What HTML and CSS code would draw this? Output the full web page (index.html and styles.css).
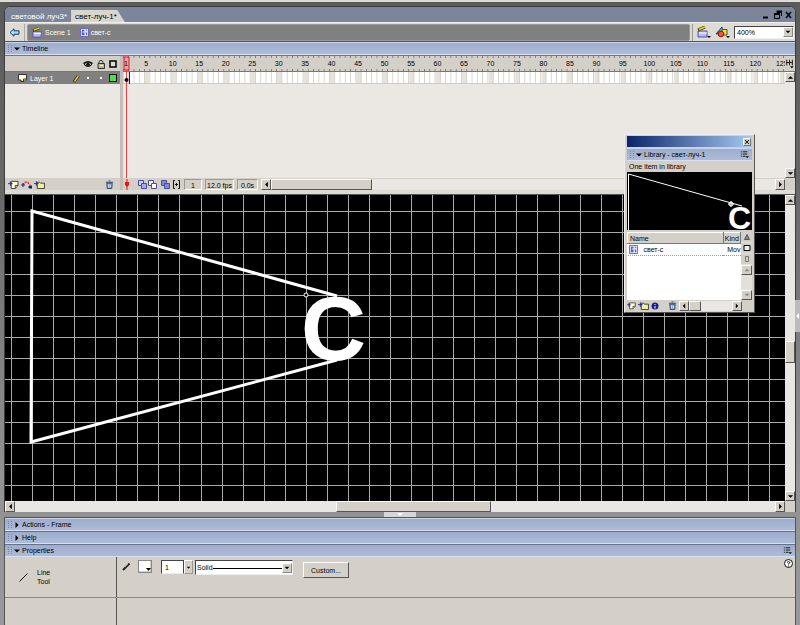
FILE: index.html
```html
<!DOCTYPE html>
<html lang="ru">
<head>
<meta charset="utf-8">
<meta name="viewport" content="width=device-width, initial-scale=1">
<title>свет-луч-1</title>
<link rel="stylesheet" href="styles.css">
</head>
<body>
<svg width="0" height="0" class="defs" aria-hidden="true">
  <symbol id="up" viewBox="0 0 10 10"><path d="M2 6.500H8L5 3.500Z"/></symbol>
  <symbol id="down" viewBox="0 0 10 10"><path d="M2 3.500H8L5 6.500Z"/></symbol>
  <symbol id="left" viewBox="0 0 10 10"><path d="M6.500 2V8L3.500 5Z"/></symbol>
  <symbol id="right" viewBox="0 0 10 10"><path d="M3.500 2V8L6.500 5Z"/></symbol>
  <symbol id="clip" viewBox="0 0 10 10"><path d="M.5 .5H9.500V9.500H.5Z" fill="#e9ebff" stroke="#5a60b8"/><path d="M2 2H5V4H3V5H5V8H2ZM6 2L8 4V2ZM6 5H8V8H7Z" fill="#5a60b8"/></symbol>
  <symbol id="scene" viewBox="0 0 12 12"><path d="M1 5H10V11H1Z" fill="#b9bcf5" stroke="#5254a8"/><path d="M2 7H10" stroke="#fff"/><path d="M1 4L8 1" stroke="#4a4a10" stroke-width="3"/><path d="M2 3.500L8 1" stroke="#e6d520" stroke-width="1.500"/></symbol>
  <symbol id="trash" viewBox="0 0 10 10"><path d="M2 3.500H8L7.500 9.500H2.500Z" fill="#7fa6d2" stroke="#23446f"/><path d="M1 2.500H9M4 1H6" stroke="#23446f"/><path d="M4 5V8M6 5V8" stroke="#d9e8ff"/></symbol>
  <symbol id="menu" viewBox="0 0 10 10"><path d="M1 2H2M1 4.500H2M1 7H2M3 2H8M3 4.500H8M3 7H6" stroke="#111"/><path d="M6 7H10L8 9Z"/></symbol>
  <symbol id="folder" viewBox="0 0 12 10"><path d="M3.500 2.500H6L7 3.500H11.500V9.500H3.500Z" fill="#f5ef9b" stroke="#333"/><path d="M0 4H5M2.500 1.500V6.500" stroke="#1d2c88"/></symbol>
  <symbol id="page" viewBox="0 0 12 10"><path d="M3.500 1.500H11V6L8 9.500H3.500Z" fill="#fffbd8" stroke="#333"/><path d="M8 9V6H11" fill="none" stroke="#333"/><path d="M0 4H5M2.500 1.500V6.500" stroke="#1d2c88"/></symbol>
</svg>

<div class="app">
  <main class="document">
    <header class="tabs">
      <a class="tab" href="#a">световой луч3*</a>
      <a class="tab active" href="#b">свет-луч-1*</a>
      <svg class="window-buttons" width="32" height="10" viewBox="0 0 32 10" aria-hidden="true"><path d="M2 7.500H7" stroke="#000" stroke-width="2"/><path d="M16 2.500H20.500V6M13.500 4.500H18.500V8.500H13.500Z" fill="none" stroke="#000"/><path d="M15.500 1.500H21M13 4H19" stroke="#000" stroke-width="2"/><path d="M25 2L30 8M30 2L25 8" stroke="#000" stroke-width="1.500"/></svg>
    </header>

    <nav class="editbar">
      <button class="flat back" aria-label="Back"><svg width="11" height="9" viewBox="0 0 11 9"><path d="M1 4.500L5 .8V2.800H10V6.200H5V8.200Z" fill="#9fe2f5" stroke="#163a62"/></svg></button>
      <div class="crumbs">
        <svg width="11" height="11"><use href="#scene"/></svg><a href="#scene1">Scene 1</a>
        <svg width="9" height="9"><use href="#clip"/></svg><a href="#symbol">свет-с</a>
      </div>
      <div class="edit-tools">
        <button class="flat" aria-label="Edit scene"><svg width="14" height="12" viewBox="0 0 14 12"><use href="#scene" width="12" height="12"/><path d="M10 10H14L12 12Z"/></svg></button>
        <button class="flat" aria-label="Edit symbols"><svg width="15" height="12" viewBox="0 0 15 12"><path d="M1 8L7 1L8 7Z" fill="#38cdbd" stroke="#146"/><path d="M7 3.500H12V9H7Z" fill="#ede23a" stroke="#553"/><circle cx="6" cy="8" r="2.800" fill="#f5543a" stroke="#811"/><path d="M11 10H15L13 12Z"/></svg></button>
        <span class="combo zoom"><select aria-label="Zoom"><option>400%</option></select><svg width="10" height="10"><use href="#down"/></svg></span>
      </div>
    </nav>

    <h2 class="panel-title"><i class="grip"></i><svg width="8" height="8" viewBox="1 1 8 8"><use href="#down" width="10" height="10"/></svg>Timeline</h2>

    <section class="timeline">
      <div class="layers">
        <div class="layer-head">
          <svg width="10" height="8" viewBox="0 0 10 8"><path d="M0 3Q5-1 10 3L8 6Q5 8 2 6Z" fill="#222"/><path d="M2 4.500L3.500 3.500M6.500 3.500L8 4.500" stroke="#ddd"/></svg>
          <svg width="8" height="10" viewBox="0 0 8 10"><path d="M2 5V2.500Q4 0 6 2.500V5" fill="none" stroke="#333"/><path d="M1 4.500H7.500V9.500H1Z" fill="#b5bb94" stroke="#333"/><path d="M3 6.500H6" stroke="#fff"/></svg>
          <svg width="8" height="8" viewBox="0 0 8 8"><path d="M1 1H7V7H1Z" fill="#ddd" stroke="#000" stroke-width="1.500"/></svg>
        </div>
        <div class="layer">
          <svg width="9" height="8" viewBox="0 0 9 8"><path d="M.5 .5H8.500V5L6 7.500H3V6H.5Z" fill="#fffed2" stroke="#333"/><path d="M5.500 7V5H8" fill="none" stroke="#333"/></svg>
          <span class="layer-name">Layer 1</span>
          <svg width="7" height="9" viewBox="0 0 7 9"><path d="M1 8L5.500 1.500" stroke="#222" stroke-width="3"/><path d="M1.500 7.500L5.500 1.500" stroke="#f2c53c" stroke-width="1.500"/></svg>
          <i class="dot"></i><i class="dot"></i><i class="swatch"></i>
        </div>
        <div class="layer-foot">
          <svg width="11" height="9"><use href="#page"/></svg>
          <svg width="11" height="9" viewBox="0 0 11 9"><path d="M2 5Q5-1 9 5" fill="none" stroke="#e22" stroke-width="1.500" stroke-dasharray="2 1"/><path d="M0 5H4M2 3V7M8 6H11V8H8Z" stroke="#1d2c88"/></svg>
          <svg width="11" height="9"><use href="#folder"/></svg>
          <svg class="push" width="9" height="9"><use href="#trash"/></svg>
        </div>
      </div>
      <div class="frames">
        <div class="ruler"><div class="numbers"><span>5</span><span>10</span><span>15</span><span>20</span><span>25</span><span>30</span><span>35</span><span>40</span><span>45</span><span>50</span><span>55</span><span>60</span><span>65</span><span>70</span><span>75</span><span>80</span><span>85</span><span>90</span><span>95</span><span>100</span><span>105</span><span>110</span><span>115</span><span>120</span><span>125</span></div></div>
        <div class="cells"></div>
        <svg class="playhead" width="8" height="122" viewBox="0 0 8 122" aria-hidden="true"><path d="M1 1H6V14H1Z" fill="#f77" fill-opacity=".5" stroke="#e11"/><path d="M3.500 14V122" stroke="#e44"/><circle cx="3.500" cy="24" r="2"/><path d="M6.500 16V28" stroke="#222"/><text x="1" y="10">1</text></svg>
        <div class="frame-foot">
          <svg width="8" height="11" viewBox="0 0 8 11"><path d="M4 0V11" stroke="#e11"/><path d="M2 3H6V6L4 8L2 6Z" fill="#e11"/></svg>
          <svg class="onion" width="42" height="9" viewBox="0 0 42 9"><g stroke="#4b5098"><path d="M.5 .5H5.500V5.500H.5Z" fill="#c9ccf5"/><path d="M3.500 3.500H8.500V8.500H3.500Z" fill="#a5abef"/><path d="M10.500 .5H15.500V5.500H10.500Z" fill="#eee"/><path d="M13.500 3.500H18.500V8.500H13.500Z" fill="#fff"/><path d="M23.500 .5H28.500V5.500H23.500Z" fill="#8188dc"/><path d="M26.500 3.500H31.500V8.500H26.500Z" fill="#8188dc"/></g><path d="M37 .5H35.500V8.500H37M40 .5H41.500V8.500H40M38.500 3V6M37 4.500H40" fill="none" stroke="#111"/></svg>
          <span class="readout">1</span><span class="readout fps">12.0 fps</span><span class="readout">0.0s</span>
          <div class="hscroll"><button aria-label="Left"><svg width="9" height="9"><use href="#left"/></svg></button><i class="thumb t100"></i><button class="push" aria-label="Right"><svg width="9" height="9"><use href="#right"/></svg></button></div>
        </div>
      </div>
      <div class="side">
        <svg width="10" height="16" viewBox="0 0 10 16"><path d="M1.500 4V10M4.500 4V10M7.500 4V10M1 7H8" stroke="#111"/><path d="M5 11H9L7 13Z"/></svg>
        <div class="vscroll"><button aria-label="Up"><svg width="9" height="9"><use href="#up"/></svg></button><button class="push-down" aria-label="Down"><svg width="9" height="9"><use href="#down"/></svg></button></div>
        <i class="corner"></i>
      </div>
    </section>

    <section class="stage">
      <svg class="canvas" width="100%" height="306" role="img" aria-label="Stage">
        <rect width="100%" height="306"/>
        <path class="grid" d="M6.500 0v306m21-306v306m21-306v306m21-306v306m21-306v306m21-306v306m21-306v306m21-306v306m21-306v306m22-306v306m21-306v306m21-306v306m21-306v306m21-306v306m21-306v306m21-306v306m21-306v306m21-306v306m21-306v306m21-306v306m21-306v306m21-306v306m21-306v306m21-306v306m21-306v306m21-306v306m22-306v306m21-306v306m21-306v306m21-306v306m21-306v306m21-306v306m21-306v306m21-306v306m21-306v306m21-306v306m21-306v306"/>
        <path class="grid" d="M0 16.500h2000M0 37.500h2000M0 58.500h2000M0 79.500h2000M0 100.500h2000M0 121.500h2000M0 142.500h2000M0 163.500h2000M0 184.500h2000M0 206.500h2000M0 227.500h2000M0 248.500h2000M0 269.500h2000M0 290.500h2000"/>
        <path class="beam" d="M332 101L27 16L26 247L332 165"/>
        <circle cx="301" cy="100" r="2" fill="#000" stroke="#fff"/>
        <text class="letter" x="296" y="165">С</text>
      </svg>
      <div class="vscroll"><button aria-label="Up"><svg width="9" height="9"><use href="#up"/></svg></button><i class="thumb"></i><button aria-label="Down"><svg width="9" height="9"><use href="#down"/></svg></button></div>
      <div class="hscroll"><button aria-label="Left"><svg width="9" height="9"><use href="#left"/></svg></button><i class="thumb t155"></i><button class="push" aria-label="Right"><svg width="9" height="9"><use href="#right"/></svg></button></div>
      <i class="corner"></i>
    </section>
  </main>

  <div class="splitter"><svg width="32" height="5" viewBox="0 0 32 5"><path fill="#d5d5d5" d="M0 0H32V5H0Z"/><path d="M13 1H19L16 4Z" fill="#fff"/></svg></div>

  <section class="panels">
    <h2 class="panel-title"><i class="grip"></i><svg width="8" height="8" viewBox="1 1 8 8"><use href="#right" width="10" height="10"/></svg>Actions - Frame</h2>
    <h2 class="panel-title"><i class="grip"></i><svg width="8" height="8" viewBox="1 1 8 8"><use href="#right" width="10" height="10"/></svg>Help</h2>
    <h2 class="panel-title"><i class="grip"></i><svg width="8" height="8" viewBox="1 1 8 8"><use href="#down" width="10" height="10"/></svg>Properties<svg class="push" width="9" height="9"><use href="#menu"/></svg></h2>
    <div class="properties">
      <div class="tool"><svg width="9" height="9" viewBox="0 0 9 9"><path d="M.5 8.500L8.500 .5" stroke="#111"/></svg><span>Line<br>Tool</span></div>
      <form class="stroke">
        <svg width="9" height="9" viewBox="0 0 9 9"><path d="M1 8L7.500 1.500" stroke="#222" stroke-width="2"/><path d="M3 5L6 2" stroke="#999"/></svg>
        <button type="button" class="color" aria-label="Stroke color"><svg width="5" height="4" viewBox="0 0 5 4"><path d="M0 0H5L2.500 3Z"/></svg></button>
        <span class="weight"><input type="text" value="1" aria-label="Stroke height"><button type="button" aria-label="Height slider"><svg width="7" height="9" viewBox="1 0 8 10"><path d="M3 4H7L5 6.500Z"/></svg></button></span>
        <span class="combo style"><select aria-label="Stroke style"><option>Solid</option></select><svg width="10" height="10"><use href="#down"/></svg></span>
        <button type="button" class="custom">Custom...</button>
      </form>
      <svg class="help" width="9" height="9" viewBox="0 0 9 9"><circle cx="4.500" cy="4.500" r="4" fill="#fff" stroke="#111"/><path d="M3 3.500Q4.500 1.500 6 3.500L4.500 5V5.500M4.500 6.500V7.500" fill="none" stroke="#111"/></svg>
    </div>
    <div class="drawer"></div>
  </section>

  <aside class="library">
    <div class="caption"><button aria-label="Close"><svg width="6" height="6" viewBox="0 0 6 6"><path d="M1 1L5 5M5 1L1 5" stroke="#111"/></svg></button></div>
    <h2 class="panel-title"><i class="grip"></i><svg width="8" height="8" viewBox="1 1 8 8"><use href="#down" width="10" height="10"/></svg>Library - свет-луч-1<svg class="push" width="9" height="9"><use href="#menu"/></svg></h2>
    <p>One item in library</p>
    <svg class="preview" width="100%" height="58" viewBox="0 0 125 58" role="img" aria-label="Preview"><rect width="125" height="58"/><path d="M1.500 58V2L115 34" fill="none" stroke="#fff"/><circle cx="104" cy="32" r="2" fill="none" stroke="#fff"/><path d="M104 29V35M101 32H107" stroke="#fff"/><text x="101" y="57">С</text></svg>
    <div class="list">
      <table>
        <thead><tr><th>Name</th><th class="kind">Kind</th></tr></thead>
        <tbody><tr><td><svg width="9" height="9"><use href="#clip"/></svg>свет-с</td><td class="kind">Mov</td></tr></tbody>
      </table>
      <div class="list-side">
        <button aria-label="Sort"><svg width="8" height="8" viewBox="0 0 8 8"><path d="M1.500 6.500H6.500L4 1.500Z" fill="#888" stroke="#555"/></svg></button>
        <button aria-label="Wide view"><svg width="8" height="8" viewBox="0 0 8 8"><path d="M1 1.500H7V6.500H1Z" fill="#eee" stroke="#000"/></svg></button>
        <button aria-label="Narrow view"><svg width="8" height="8" viewBox="0 0 8 8"><path d="M2.500 1.500H5.500V6.500H2.500Z" fill="none" stroke="#777"/></svg></button>
        <button class="raised" aria-label="Up"><svg width="8" height="8" fill="#888"><use href="#up"/></svg></button>
        <button class="raised push-down" aria-label="Down"><svg width="8" height="8" fill="#888"><use href="#down"/></svg></button>
      </div>
    </div>
    <footer>
      <svg width="9" height="9"><use href="#page"/></svg><svg width="11" height="9"><use href="#folder"/></svg>
      <svg width="8" height="8" viewBox="0 0 8 8"><circle cx="4" cy="4" r="3.500" fill="#17258a"/><path d="M4 2V3M4 4V6.500" stroke="#fff"/></svg>
      <svg class="push" width="9" height="9"><use href="#trash"/></svg>
      <div class="hscroll"><button aria-label="Left"><svg width="8" height="8"><use href="#left"/></svg></button><i class="thumb t12"></i><button class="push" aria-label="Right"><svg width="8" height="8"><use href="#right"/></svg></button></div>
    </footer>
  </aside>
  <svg class="dock-handle" width="5" height="32" viewBox="0 0 5 32" aria-hidden="true"><path d="M0 0H5V32H0Z" fill="#bbb"/><path d="M4 13V19L1 16Z" fill="#fff"/></svg>
</div>
</body>
</html>
```
FILE: styles.css
```css
* { box-sizing: border-box; }
body { margin: 0; background: #8f8f8f; font: 7px/9px "Liberation Sans", Arial, sans-serif; color: #000; }
svg { display: block; flex: none; }
.defs { position: absolute; }
button, input, select { font: inherit; color: inherit; margin: 0; padding: 0; border: 0; border-radius: 0; }
button { display: flex; align-items: center; justify-content: center; background: #d4d0c8; }
a { color: inherit; text-decoration: none; }
i { display: block; flex: none; }
.push { margin-left: auto; }
.push-down { margin-top: auto; }
.flat { background: none; }

.app { position: relative; display: flex; flex-direction: column; min-height: 100vh; padding: 4px 4px 0 4px; border-top: 2px solid #dedbd5; background: linear-gradient(#5b5b5b, #686868 30%, #929292 75%, #999); }
.document { border: solid #3d3d3d; border-width: 1px 1px 0 1px; border-radius: 6px 6px 0 0; background: #d4d0c8; overflow: hidden; }

.tabs { display: flex; align-items: flex-end; height: 15px; padding-left: 1px; background: #7b869a; color: #fff; font-size: 8px; }
.tab { height: 12px; padding: 2px 4px 2px 5px; }
.tab.active { padding: 2px 8px 2px 4px; background: #d9d6cf; color: #000; clip-path: polygon(0 0, 86% 0, 100% 100%, 0 100%); }
.window-buttons { margin: 0 2px 2px auto; }

.editbar { display: flex; align-items: center; height: 20px; border-top: 1px solid #f1efeb; border-bottom: 1px solid #555; background: #dedbd5; }
.back { width: 20px; height: 17px; border-right: 1px solid #aaa; }
.crumbs { display: flex; flex: 1; align-items: center; gap: 2px; height: 17px; margin-left: 2px; padding-left: 4px; border: 1px solid #999; border-radius: 2px; background: #808080; color: #fff; }
.crumbs a { margin-right: 7px; }
.edit-tools { display: flex; align-items: center; gap: 4px; margin-left: 2px; padding: 2px 1px 2px 4px; border-left: 1px solid #999; }
.combo { display: flex; align-items: center; height: 13px; border: 1px solid #444; border-right-color: #eee; border-bottom-color: #eee; background: #fff; }
.combo select { flex: 1; min-width: 0; height: 11px; padding-left: 2px; appearance: none; background: #fff; }
.combo svg { border: 1px solid #888; border-top-color: #fff; border-left-color: #fff; background: #d4d0c8; }
.zoom { width: 60px; }

.panel-title { display: flex; align-items: center; height: 13px; margin: 0; padding: 0 3px 0 3px; border-top: 1px solid #c9d4ea; border-bottom: 1px solid #d7dff0; background: linear-gradient(#9dadcb, #adbbd8); font: inherit; }
.panel-title svg { margin-right: 1px; }
.panel-title .push { margin-right: 0; }
.grip { width: 4px; height: 7px; margin-right: 1px; border: dotted #7888a8; border-width: 0 1px; }

.timeline { display: flex; height: 139px; border-top: 1px solid #777; border-bottom: 4px solid #dedbd5; }
.layers { display: flex; flex-direction: column; width: 115px; background: #ebe8e3; }
.layer-head { display: flex; align-items: center; justify-content: flex-end; gap: 4px; height: 16px; padding: 0 3px; border-bottom: 1px solid #777; background: #d4d0c8; }
.layer { display: flex; align-items: center; gap: 3px; height: 12px; padding: 0 3px 0 13px; background: #808080; color: #fff; }
.layer-name { flex: 1; }
.dot { width: 2px; height: 2px; margin: 0 4px; background: #fff; }
.swatch { width: 8px; height: 8px; border: 1px solid #111; background: #4ce04c; }
.layer-foot { display: flex; align-items: center; gap: 2px; height: 12px; margin-top: auto; padding: 0 6px 0 3px; background: #d4d0c8; }
.frames { position: relative; display: flex; flex: 1; flex-direction: column; min-width: 0; border-left: 3px solid #c3bfb8; background: #ebe8e3; }
.ruler { height: 16px; overflow: hidden; border-bottom: 1px solid #777; background: linear-gradient(90deg, #777 1px, transparent 1px) 0 0 / .8% 2px repeat-x, linear-gradient(90deg, #777 1px, transparent 1px) 0 100% / .8% 2px repeat-x, #d4d0c8; }
.numbers { display: grid; grid-template-columns: repeat(25, minmax(0, 1fr)); width: 100%; margin: 3px 0 0 10px; text-align: center; }
.cells { height: 12px; border-bottom: 1px solid #cfccc5; background: linear-gradient(90deg, #d5d2cb 1px, transparent 1px) 0 0 / .8% 100%, linear-gradient(90deg, #fff 80%, #e6e3dd 80%) 0 0 / 4% 100%; }
.playhead { position: absolute; left: 0; top: 0; }
.playhead text { font-size: 7px; }
.frame-foot { display: flex; align-items: center; gap: 3px; height: 12px; margin-top: auto; background: #d4d0c8; }
.onion { margin: 0 1px 0 4px; }
.readout { width: 18px; height: 11px; padding-top: 1px; border: 1px solid #999; border-right-color: #fff; border-bottom-color: #fff; text-align: center; }
.readout + .readout { width: 21px; }
.readout.fps { width: 28px; }
.readout + .readout.fps { width: 29px; }
.hscroll, .vscroll { display: flex; background: #e9e7e3; }
.hscroll { flex: 1; height: 11px; }
.vscroll { flex-direction: column; flex: 1; }
.hscroll button, .vscroll button, .thumb, .raised { flex: none; border: 1px solid #555; border-top-color: #fff; border-left-color: #fff; background: #d4d0c8; }
.hscroll button { width: 10px; }
.vscroll button { width: 10px; height: 10px; }
.t100 { width: 101px; }
.side { display: flex; flex-direction: column; width: 10px; background: #d4d0c8; }
.side > svg { border-bottom: 1px solid #777; }
.side .corner { height: 12px; }

.stage { display: grid; grid-template-columns: minmax(0, 1fr) 10px; border-top: 1px solid #555; }
.canvas { overflow: hidden; }
.grid { stroke: #a9a9a9; }
.beam { fill: none; stroke: #fff; stroke-width: 3; }
.letter { fill: #fff; font: bold 90px "Liberation Sans", Arial, sans-serif; }
.stage .thumb { margin: 136px 0 auto; height: 22px; }
.stage .hscroll .thumb { width: 155px; height: 11px; margin: 0 0 0 41.2%; }
.stage .corner { background: #d4d0c8; }

.splitter { display: flex; justify-content: center; height: 5px; background: #929292; }
.panels { display: flex; flex: 1; flex-direction: column; border: 1px solid #555; border-bottom: 0; background: #d4d0c8; }
.panels .panel-title + .panel-title { border-top: 1px solid #65728b; }
.properties { display: flex; height: 41px; border-bottom: 1px solid #888; }
.tool { display: flex; align-items: center; gap: 9px; width: 112px; padding-left: 14px; border-right: 1px solid #555; }
.stroke { display: flex; flex: 1; align-items: flex-start; padding: 3px 5px; }
.stroke > svg { margin-top: 2px; }
.color { align-items: flex-end; justify-content: flex-end; width: 14px; height: 13px; margin-left: 7px; border: 1px solid #888; background: #fff; box-shadow: inset -1px -1px #d4d0c8; }
.weight { display: flex; margin-left: 9px; }
.weight input { width: 23px; height: 14px; padding-left: 3px; border: 1px solid #444; border-bottom-color: #eee; background: #fff; }
.weight button { width: 9px; border: 1px solid #999; border-top-color: #fff; border-left-color: #fff; }
.style { width: 98px; height: 15px; margin-left: 2px; }
.style select { height: 12px; padding-left: 1px; background: linear-gradient(#000, #000) 17px 6px / 100% 1px no-repeat #fff; }
.custom { width: 46px; height: 16px; margin: 2px 0 0 10px; border: 1px solid #555; border-top-color: #fff; border-left-color: #fff; }
.help { margin: 2px; }
.drawer { flex: 1; width: 112px; min-height: 28px; border-right: 1px solid #555; }

.library { position: absolute; top: 132px; right: 45px; width: 131px; padding: 1px 2px; border: 1px solid #eee; border-right-color: #555; border-bottom-color: #555; background: #d4d0c8; }
.caption { display: flex; justify-content: flex-end; align-items: center; height: 11px; padding-right: 1px; background: linear-gradient(90deg, #0b246b, #a6caf0); }
.caption button { width: 8px; height: 8px; border: 1px solid #777; border-top-color: #fff; border-left-color: #fff; }
.library .panel-title { margin-top: 1px; }
.library p { margin: 0; padding: 1px 2px; }
.preview { margin-bottom: 2px; }
.preview text { fill: #fff; font: bold 32px "Liberation Sans", Arial, sans-serif; }
.list { display: flex; height: 68px; background: #fff; }
table { flex: 1; align-self: flex-start; border-collapse: collapse; table-layout: fixed; }
th { height: 11px; padding: 0 2px; border: 1px solid #777; border-top-color: #fff; border-left-color: #fff; background: #d4d0c8; font-weight: normal; text-align: left; }
td { height: 12px; padding: 0 1px; border-bottom: 1px dotted #999; }
td svg { display: inline-block; margin-right: 6px; vertical-align: middle; }
.kind { width: 16px; padding: 0 0 0 1px; overflow: hidden; }
td.kind { padding-left: 4px; white-space: nowrap; }
.list-side { display: flex; flex-direction: column; gap: 1px; width: 11px; background: #e3e0da; }
.list-side button { height: 10px; }
.library footer { display: flex; align-items: center; gap: 2px; height: 11px; padding-right: 10px; }
.library footer .hscroll { flex: none; width: 63px; height: 10px; }
.t12 { width: 12px; }
.dock-handle { position: absolute; right: 0; top: 298px; }
```
